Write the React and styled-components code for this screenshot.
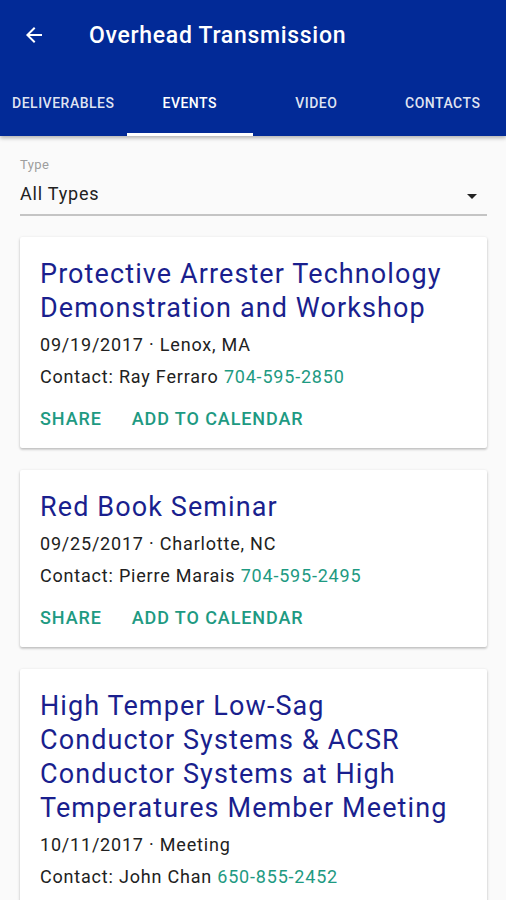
import React from "react";
import styled, { createGlobalStyle } from "styled-components";

const GlobalStyle = createGlobalStyle`
  body {
    margin: 0;
    background: #fafafa;
    font-family: Roboto, "Noto Sans", sans-serif;
  }
`;

const Header = styled.header`
  background: #022a97;
  color: white;
  box-shadow: 0 2px 4px rgba(0, 0, 0, 0.3);
  position: relative;
  z-index: 1;
`;

const AppBar = styled.div`
  height: 70px;
  display: flex;
  align-items: center;
  padding-left: 22px;
`;

const BackButton = styled.div`
  width: 24px;
  height: 24px;
  display: flex;
  margin-right: 43px;
`;

const Title = styled.h1`
  margin: 0;
  font-size: 23px;
  font-weight: 500;
  letter-spacing: 0.7px;
`;

const Tabs = styled.nav`
  display: grid;
  grid-template-columns: repeat(4, 1fr);
  height: 66px;
`;

const Tab = styled.div`
  display: flex;
  align-items: center;
  justify-content: center;
  font-size: 14px;
  font-weight: 500;
  letter-spacing: 0.5px;
  text-transform: uppercase;
  color: ${(p) => (p.active ? "#fff" : "rgba(255,255,255,0.88)")};
  border-bottom: 3px solid ${(p) => (p.active ? "#fff" : "transparent")};
  padding-top: 2px;
`;

const Content = styled.main`
  padding: 21px 19px 20px 20px;
`;

const Field = styled.div`
  margin-bottom: 21px;
`;

const FieldLabel = styled.div`
  font-size: 13px;
  color: #9e9e9e;
  line-height: 16px;
  letter-spacing: 0.4px;
`;

const Select = styled.div`
  display: flex;
  align-items: center;
  justify-content: space-between;
  height: 41px;
  border-bottom: 2px solid #c4c4c4;
  font-size: 18px;
  letter-spacing: 0.8px;
  color: #212121;
`;

const Caret = styled.span`
  width: 0;
  height: 0;
  border-left: 5px solid transparent;
  border-right: 5px solid transparent;
  border-top: 5px solid #222;
  margin-right: 10px;
  margin-top: 5px;
`;

const CardList = styled.div`
  display: flex;
  flex-direction: column;
  gap: 22px;
`;

const Card = styled.article`
  background: #fff;
  box-shadow: 0 1px 3px rgba(0, 0, 0, 0.22), 0 2px 2px rgba(0, 0, 0, 0.08);
  border-radius: 2px;
  padding: 20px 20px 13px 20px;
`;

const EventTitle = styled.h2`
  margin: 0 0 4px;
  font-size: 27px;
  font-weight: 400;
  line-height: 34px;
  letter-spacing: 1.1px;
  color: #1a1f8e;
`;

const Line = styled.div`
  font-size: 18px;
  line-height: 32px;
  letter-spacing: 0.8px;
  color: #212121;
`;

const Phone = styled.span`
  color: #1e9a82;
`;

const Actions = styled.div`
  display: flex;
  gap: 30px;
  margin-top: 8px;
  height: 34px;
  align-items: center;
`;

const Action = styled.span`
  font-size: 18px;
  font-weight: 500;
  letter-spacing: 0.9px;
  text-transform: uppercase;
  color: #1e9a82;
`;

const events = [
  {
    title: "Protective Arrester Technology Demonstration and Workshop",
    when: "09/19/2017 · Lenox, MA",
    contact: "Ray Ferraro",
    phone: "704-595-2850",
  },
  {
    title: "Red Book Seminar",
    when: "09/25/2017 · Charlotte, NC",
    contact: "Pierre Marais",
    phone: "704-595-2495",
  },
  {
    title:
      "High Temper Low-Sag Conductor Systems & ACSR Conductor Systems at High Temperatures Member Meeting",
    when: "10/11/2017 · Meeting",
    contact: "John Chan",
    phone: "650-855-2452",
  },
];

const tabs = ["Deliverables", "Events", "Video", "Contacts"];

export default function App() {
  return (
    <>
      <GlobalStyle />
      <Header>
        <AppBar>
          <BackButton>
            <svg width="24" height="24" viewBox="0 0 24 24">
              <path
                fill="#fff"
                d="M20 11H7.83l5.59-5.59L12 4l-8 8 8 8 1.41-1.41L7.83 13H20v-2z"
              />
            </svg>
          </BackButton>
          <Title>Overhead Transmission</Title>
        </AppBar>
        <Tabs>
          {tabs.map((t) => (
            <Tab key={t} active={t === "Events"}>
              {t}
            </Tab>
          ))}
        </Tabs>
      </Header>
      <Content>
        <Field>
          <FieldLabel>Type</FieldLabel>
          <Select>
            All Types
            <Caret />
          </Select>
        </Field>
        <CardList>
          {events.map((e) => (
            <Card key={e.title}>
              <EventTitle>{e.title}</EventTitle>
              <Line>{e.when}</Line>
              <Line>
                Contact: {e.contact} <Phone>{e.phone}</Phone>
              </Line>
              <Actions>
                <Action>Share</Action>
                <Action>Add to calendar</Action>
              </Actions>
            </Card>
          ))}
        </CardList>
      </Content>
    </>
  );
}
